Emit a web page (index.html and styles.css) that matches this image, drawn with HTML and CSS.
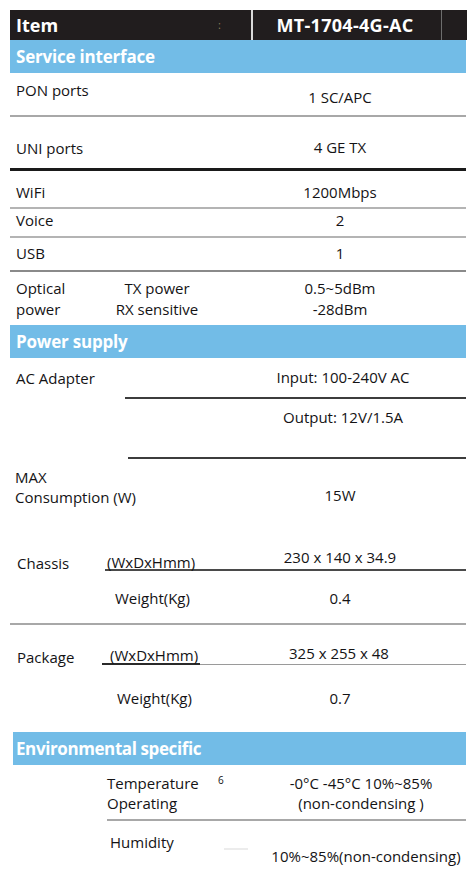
FILE: index.html
```html
<!DOCTYPE html>
<html lang="en">
<head>
<meta charset="utf-8">
<title>MT-1704-4G-AC specifications</title>
<link rel="stylesheet" href="styles.css">
</head>
<body>
<div class="sheet">
  <div class="head">
    <div class="h-item">Item<span class="dots">:</span></div>
    <div class="h-model">MT-1704-4G-AC</div>
    <div class="h-end"></div>
  </div>

  <div class="band">Service interface</div>

  <div class="row r-pon">
    <div class="lab">PON ports</div>
    <div class="val">1 SC/APC</div>
  </div>
  <div class="row r-uni">
    <div class="lab">UNI ports</div>
    <div class="val">4 GE TX</div>
  </div>
  <div class="row r-wifi">
    <div class="lab">WiFi</div>
    <div class="val">1200Mbps</div>
  </div>
  <div class="row r-voice">
    <div class="lab">Voice</div>
    <div class="val">2</div>
  </div>
  <div class="row r-usb">
    <div class="lab">USB</div>
    <div class="val">1</div>
  </div>
  <div class="row r-opt">
    <div class="main">Optical<br>power</div>
    <div class="sub-c">TX power<br>RX sensitive</div>
    <div class="val">0.5~5dBm<br>-28dBm</div>
  </div>

  <div class="band">Power supply</div>

  <div class="row r-ac">
    <div class="main">AC Adapter</div>
    <div class="right">
      <div class="ac-in"><div class="val">Input: 100-240V AC</div></div>
      <div class="ac-out"><div class="val">Output: 12V/1.5A</div></div>
    </div>
  </div>
  <div class="row r-max">
    <div class="lab">MAX<br>Consumption (W)</div>
    <div class="val">15W</div>
  </div>
  <div class="row r-chassis">
    <div class="main">Chassis</div>
    <div class="right">
      <div class="ch-dim">
        <div class="sub">(WxDxHmm)</div>
        <div class="val">230 x 140 x 34.9</div>
      </div>
      <div class="ch-wt">
        <div class="sub">Weight(Kg)</div>
        <div class="val">0.4</div>
      </div>
    </div>
  </div>
  <div class="row r-pkg">
    <div class="main">Package</div>
    <div class="right">
      <div class="pk-dim">
        <div class="sub">(WxDxHmm)</div>
        <div class="val">325 x 255 x 48</div>
      </div>
      <div class="pk-wt">
        <div class="sub">Weight(Kg)</div>
        <div class="val">0.7</div>
      </div>
    </div>
  </div>

  <div class="band band-env">Environmental specific</div>

  <div class="row r-temp">
    <div class="sub">Temperature<br>Operating</div>
    <div class="mark">6</div>
    <div class="val">-0°C -45°C 10%~85%<br>(non-condensing )</div>
  </div>
  <div class="row r-hum">
    <div class="sub">Humidity</div>
    <div class="smudge"></div>
    <div class="val">10%~85%(non-condensing)</div>
  </div>
</div>
</body>
</html>
```

FILE: styles.css
```css
html, body {
  margin: 0;
  padding: 0;
  background: #ffffff;
}

body {
  font-family: "Open Sans", "Liberation Sans", sans-serif;
  font-size: 15px;
  line-height: 20px;
  color: #141315;
}

.sheet {
  width: 457px;
  padding: 10px 0 0 10px;
}

/* header */
.head {
  display: flex;
  height: 30px;
  background: #211d1e;
  color: #ffffff;
  font-weight: 700;
  font-size: 18px;
  line-height: 30px;
}
.h-item {
  width: 243px;
  padding-left: 6px;
  box-sizing: border-box;
  border-right: 2px solid #d9d9d9;
  display: flex;
}
.dots {
  font-size: 11px;
  color: #8d7f5a;
  margin-left: 160px;
  line-height: 30px;
  font-weight: 400;
}
.h-model {
  width: 189px;
  box-sizing: border-box;
  padding-right: 4px;
  text-align: center;
  letter-spacing: 0.3px;
  border-right: 1px solid #6d6d6d;
}
.h-end {
  flex: 1;
}

/* section bands */
.band {
  width: 456px;
  height: 33px;
  background: #72bce7;
  color: #ffffff;
  font-weight: 700;
  font-size: 17px;
  letter-spacing: -0.2px;
  line-height: 33px;
  padding-left: 6px;
  box-sizing: border-box;
  white-space: nowrap;
}
.band-env {
  width: 453px;
  margin-left: 3px;
  padding-left: 3px;
  letter-spacing: -0.4px;
}

/* rows */
.row {
  display: flex;
  width: 456px;
  box-sizing: border-box;
}
.lab {
  width: 204px;
  padding-left: 6px;
  box-sizing: border-box;
}
.val {
  width: 252px;
  text-align: center;
  box-sizing: border-box;
}
.main {
  padding-left: 6px;
  box-sizing: border-box;
}
.right {
  display: flex;
  flex-direction: column;
}

.r-pon {
  height: 44px;
  border-bottom: 2px solid #a8a8a8;
}
.r-pon .lab { padding-top: 7px; }
.r-pon .val { padding-top: 14px; }

.r-uni {
  height: 54px;
  border-bottom: 3px solid #1a1a1a;
}
.r-uni .lab { padding-top: 21px; }
.r-uni .val { padding-top: 20px; }

.r-wifi {
  height: 38px;
  border-bottom: 2px solid #b4b4b4;
}
.r-wifi .lab, .r-wifi .val { padding-top: 11px; }

.r-voice {
  height: 29px;
  border-bottom: 2px solid #b4b4b4;
}
.r-voice .lab, .r-voice .val { padding-top: 1px; }

.r-usb {
  height: 34px;
  border-bottom: 2px solid #8a8a8a;
}
.r-usb .lab, .r-usb .val { padding-top: 5px; }

.r-opt {
  height: 53px;
  line-height: 21px;
}
.r-opt .main {
  width: 90px;
  padding-top: 6px;
}
.r-opt .sub-c {
  width: 114px;
  padding-top: 6px;
  text-align: center;
}
.r-opt .val { padding-top: 6px; }

/* AC adapter */
.r-ac .main {
  width: 115px;
  padding-top: 10px;
}
.r-ac .right { width: 341px; }
.ac-in {
  height: 41px;
  border-bottom: 2px solid #3c3c3c;
  box-sizing: border-box;
}
.ac-in .val {
  margin-left: 92px;
  padding-top: 9px;
}
.ac-out {
  height: 60px;
  margin-left: 3px;
  border-bottom: 2px solid #3c3c3c;
  box-sizing: border-box;
}
.ac-out .val {
  margin-left: 89px;
  padding-top: 8px;
}

.r-max { height: 71px; }
.r-max .lab { padding-top: 8px; padding-left: 5px; }
.r-max .val { padding-top: 26px; }

/* chassis */
.r-chassis {
  height: 95px;
  border-bottom: 2px solid #a8a8a8;
}
.r-chassis .main {
  width: 95px;
  padding: 23px 0 0 7px;
}
.r-chassis .right { width: 361px; }
.ch-dim {
  display: flex;
  height: 41px;
  border-bottom: 2px solid #4a4a4a;
  box-sizing: border-box;
}
.ch-dim .sub {
  width: 109px;
  padding: 22px 0 0 2px;
  box-sizing: border-box;
}
.ch-dim .val { padding-top: 17px; }
.ch-wt { display: flex; }
.ch-wt .sub {
  width: 109px;
  padding: 17px 0 0 10px;
  box-sizing: border-box;
}
.ch-wt .val { padding-top: 17px; }

/* package */
.r-pkg { height: 107px; }
.r-pkg .main {
  width: 92px;
  padding: 22px 0 0 7px;
}
.r-pkg .right { width: 364px; }
.pk-dim {
  display: flex;
  height: 40px;
}
.pk-dim .sub {
  width: 98px;
  padding: 20px 0 0 8px;
  box-sizing: border-box;
  border-bottom: 2px solid #2a2a2a;
}
.pk-dim .val {
  width: 266px;
  padding: 18px 0 0 12px;
  border-bottom: 1px solid #9a9a9a;
}
.pk-wt { display: flex; }
.pk-wt .sub {
  width: 112px;
  padding: 23px 0 0 15px;
  box-sizing: border-box;
}
.pk-wt .val { padding-top: 23px; }

/* environmental */
.r-temp {
  height: 56px;
  width: 359px;
  margin-left: 97px;
  border-bottom: 2px solid #a8a8a8;
}
.r-temp .sub {
  width: 107px;
  padding-top: 8px;
  line-height: 20px;
}
.mark {
  width: 20px;
  font-size: 10px;
  line-height: 12px;
  padding: 9px 0 0 4px;
  box-sizing: border-box;
}
.r-temp .val {
  width: 232px;
  padding: 8px 0 0 22px;
}

.r-hum {
  height: 69px;
  width: 356px;
  margin-left: 100px;
}
.r-hum .sub {
  width: 114px;
  padding-top: 11px;
}
.smudge {
  width: 24px;
  height: 2px;
  margin-top: 27px;
  background: #ececec;
}
.r-hum .val {
  width: 218px;
  padding: 25px 0 0 18px;
  text-align: center;
  white-space: nowrap;
}
```
